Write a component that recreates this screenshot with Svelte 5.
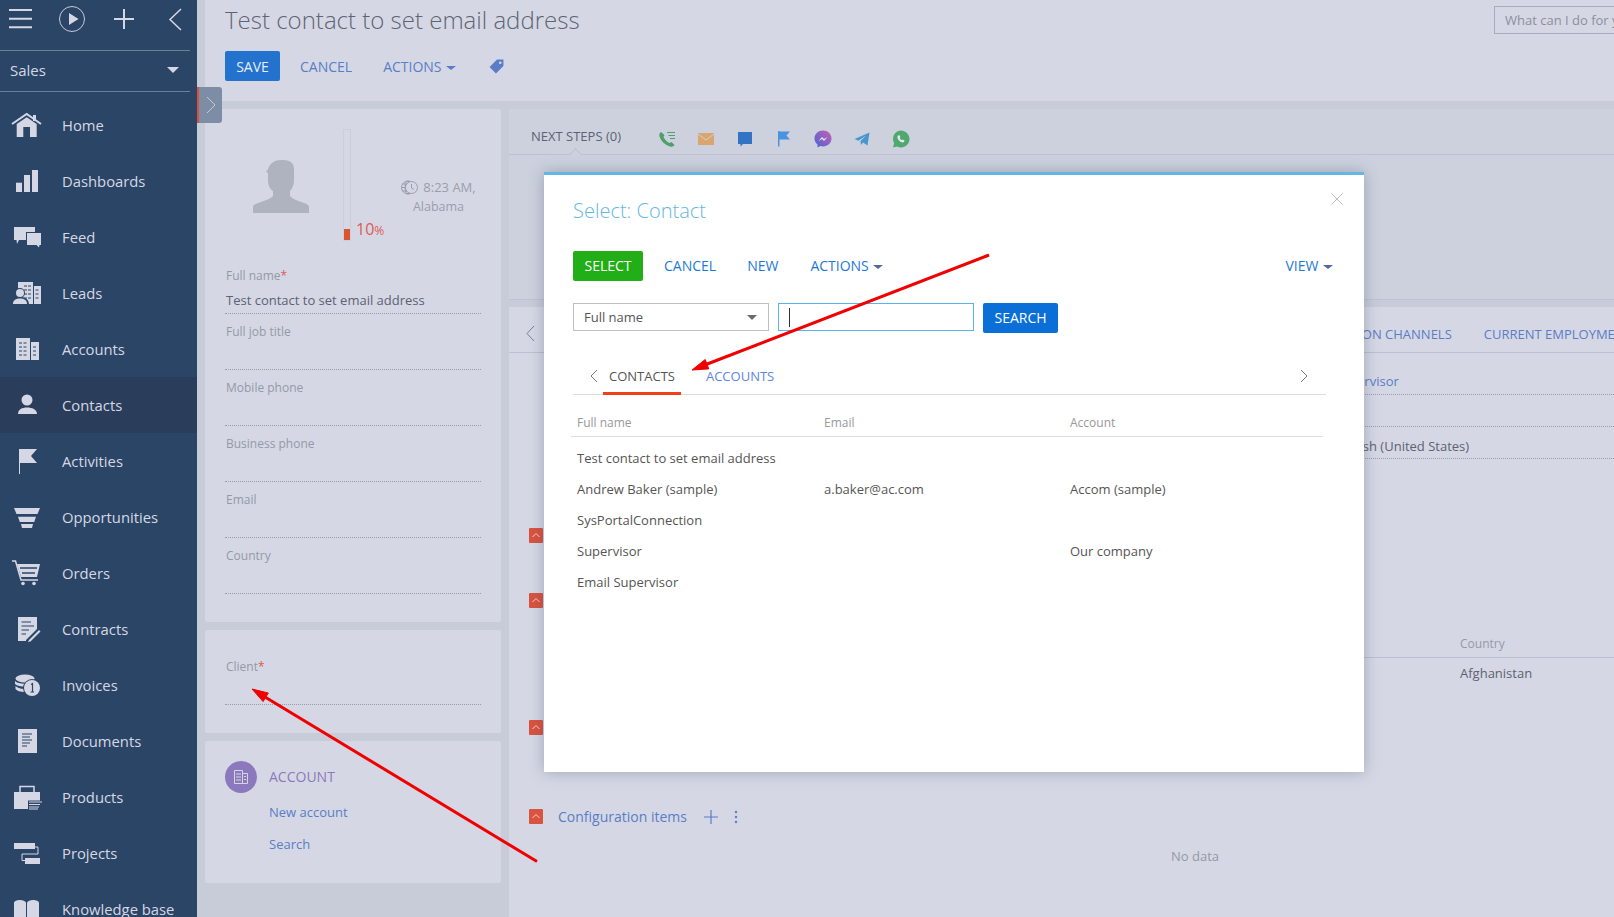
<script>
  const dark = '#2b4566';
  const nav = [
    { name: 'Home', icon: `<path d="M1 15 15.7 5 30 15" fill="none" stroke="#d5d8e4" stroke-width="2"/><rect x="22" y="6" width="3" height="6"/><path d="M5.700 15 15.700 8.200 25.700 15V28H19V18H12.300V28H5.700z"/>` },
    { name: 'Dashboards', icon: `<rect x="5" y="17.700" width="6" height="9.300"/><rect x="13" y="10" width="6" height="17"/><rect x="21" y="5" width="6" height="22"/>` },
    { name: 'Feed', icon: `<path d="M3 6H24V19H8L6 23 5.500 19H3z"/><path d="M15 11H31V25H29.500L28.500 28 25 25H15z" fill="${dark}"/><path d="M16 12H30V24H28.500L28 26.500 25.500 24H16z"/>` },
    { name: 'Leads', icon: `<path d="M7 5H22V27H7z"/><path d="M23 9H30V27H23z"/><path d="M13 9H20M13 13H20M13 17H20M13 21H20M24.500 13H28.500M24.500 17H28.500M24.500 21H28.500" stroke="${dark}" stroke-dasharray="3 1"/><circle cx="9" cy="16" r="5" fill="${dark}"/><path d="M0 28C0 21 5 20 9 20S18 21 18 28z" fill="${dark}"/><circle cx="9" cy="16" r="4"/><path d="M2 27C2 23 5 21.500 9 21.500S16 23 16 27z"/>` },
    { name: 'Accounts', icon: `<path d="M5 5H19V27H5z"/><path d="M20 9H28V27H20z"/><path d="M8 10H17M8 14H17M8 18H17M8 22H17M22 14H26M22 18H26M22 22H26" stroke="${dark}" stroke-dasharray="3 1.500"/>` },
    { name: 'Contacts', icon: `<circle cx="16" cy="11" r="5.500"/><path d="M7 25C7 20.500 11 18.500 16 18.500S26 20.500 26 25z"/>` },
    { name: 'Activities', icon: `<rect x="8" y="4" width="1" height="25"/><path d="M9 4H26L20 11 26 18H9z"/>` },
    { name: 'Opportunities', icon: `<path d="M3 7H29L26.500 13H5.500z"/><path d="M7 15.700H25L23.200 21H8.800z"/><path d="M10 23H22L21 27H11z"/>` },
    { name: 'Orders', icon: `<path d="M1 4H4.500L10 23H27" fill="none" stroke="#d5d8e4" stroke-width="1.500"/><path d="M6 7H29L26 20H10z"/><path d="M9 11H26M11 16H24" stroke="${dark}" stroke-width="1.500"/><circle cx="12" cy="26.500" r="1.800"/><circle cx="23" cy="26.500" r="1.800"/>` },
    { name: 'Contracts', icon: `<path d="M7 4H26V16L15 27V28H7z"/><path d="M10.500 9H20M10.500 13H23M10.500 17H18M10.500 21H15" stroke="${dark}" stroke-width="1.200"/><path d="M17 27 28 15.500 31 18 20 29 16 30z" fill="${dark}"/><path d="M18 27 28 17 29.500 18.500 19.500 28.500 17 29z"/>` },
    { name: 'Invoices', icon: `<ellipse cx="14" cy="9.500" rx="9.500" ry="4"/><path d="M4 12C7 15.500 20 15.500 24 12V15C20 18.500 8 18.500 4 15z"/><path d="M4.500 17C8 20 13 20 14 20V23C9 23 6 22 4.500 20z"/><circle cx="21" cy="19" r="9" fill="${dark}"/><circle cx="21" cy="19" r="8"/><path d="M20 15.500 21.500 14.500V23M19.500 23H23" fill="none" stroke="${dark}" stroke-width="1.200"/>` },
    { name: 'Documents', icon: `<path d="M7 4H26V28H7z"/><path d="M11 9H21M11 12H19M11 15H21M11 18H19M11 21H16" stroke="${dark}" stroke-width="1"/>` },
    { name: 'Products', icon: `<path d="M9 11V5.500H23V11" fill="none" stroke="#d5d8e4" stroke-width="1.500"/><path d="M3 11H29V28H3z"/><path d="M17 19.500H32V29H17z" fill="${dark}"/><path d="M18 21H31M18 23.500H29M18 26H28M18 28H27" stroke="#d5d8e4" stroke-width="1"/>` },
    { name: 'Projects', icon: `<rect x="3" y="6" width="21" height="6"/><rect x="14" y="21" width="15" height="6"/><path d="M24 10H27V17H11V23.500H14" fill="none" stroke="#d5d8e4" stroke-width="1"/>` },
    { name: 'Knowledge base', icon: `<path d="M3 10C3 8 6 7 9 7S14 8 15 9.500V32H3z"/><path d="M16 9.500C17 8 19 7 22 7S28 8 28 10V32H16z"/>` }
  ];
  const fields = ['Full job title', 'Mobile phone', 'Business phone', 'Email', 'Country'];
  const columns = ['Full name', 'Email', 'Account'];
  const rows = [
    ['Test contact to set email address', '', ''],
    ['Andrew Baker (sample)', 'a.baker@ac.com', 'Accom (sample)'],
    ['SysPortalConnection', '', ''],
    ['Supervisor', '', 'Our company'],
    ['Email Supervisor', '', '']
  ];
</script>

{#snippet chevronToggle()}
  <svg width="14" height="15" viewBox="0 0 14 15"><path d="M3.500 9 7 5.500 10.500 9" fill="none" stroke="#f3d5cc" stroke-width="1"/></svg>
{/snippet}

<div class="page">
  <aside class="sidebar">
    <div class="side-tools">
      <svg width="197" height="38" viewBox="0 0 197 38">
        <path d="M9 10H32M9 18.700H32M9 27.300H32" stroke="#d5d8e4" stroke-width="2"/>
        <circle cx="72" cy="19" r="12.500" fill="none" stroke="#c6cbd8" stroke-width="1"/>
        <path d="M69 13 78.500 19 69 25z" fill="#d5d8e4"/>
        <path d="M114 19H134M124 9V29" stroke="#d5d8e4" stroke-width="2"/>
        <path d="M181 9 170 19.500 181 30" fill="none" stroke="#d5d8e4" stroke-width="1.500"/>
      </svg>
    </div>
    <div class="side-select">
      <span>Sales</span>
      <i class="caret"></i>
    </div>
    <nav>
      {#each nav as item}
        <div class="nav-item" class:active={item.name === 'Contacts'}>
          <svg width="32" height="32" viewBox="0 0 32 32" fill="#d5d8e4">{@html item.icon}</svg>
          <span>{item.name}</span>
        </div>
      {/each}
    </nav>
  </aside>

  <main class="main">
    <header class="header">
      <div class="title-row">
        <h1>Test contact to set email address</h1>
        <div class="ask">What can I do for you?</div>
      </div>
      <div class="toolbar">
        <button class="btn save">SAVE</button>
        <span class="link cancel">CANCEL</span>
        <span class="link actions">ACTIONS <i class="caret small"></i></span>
        <svg class="tag" width="15" height="15" viewBox="0 0 14 14"><path d="M7.500 .5H13.500V6.500L6.500 13.500 .5 7.500z" fill="#5a7dc6" /><circle cx="10.500" cy="3.500" r="1.200" fill="#d5d8e4"/></svg>
      </div>
    </header>

    <div class="body">
      <div class="left">
        <section class="card profile">
          <div class="hero">
            <svg class="avatar" width="56" height="53" viewBox="0 0 56 53"><path d="M15 9C17 3 22 0 28 0 35 0 41 1 41 9V20C41 25 39 29 37 31V36C39 39 46 41 51 43 54 44 56 45 56 47V53H0V47C0 45 2 44 5 43 10 41 18 39 20 36V31C17 29 15 25 15 20V13L13 12z" fill="#afb3c0"/></svg>
            <div class="meter"><div class="meter-fill"></div></div>
            <div class="pct">10<small>%</small></div>
            <div class="time">
              <div class="clock-line">
                <svg width="17" height="17" viewBox="0 0 17 17" fill="none" stroke="#9a9eac" stroke-width="1"><circle cx="7" cy="8.500" r="6.500"/><ellipse cx="7" cy="8.500" rx="3" ry="6.500"/><path d="M.5 8.500H8M1.500 5H8M1.500 12H8"/><circle cx="10.500" cy="8.500" r="6" fill="#d5d8e4"/><path d="M10.500 5V9L13 10.500"/></svg>
                <span>8:23 AM,</span>
              </div>
              <div>Alabama</div>
            </div>
          </div>
          <div class="field">
            <div class="label">Full name<em>*</em></div>
            <div class="value">Test contact to set email address</div>
          </div>
          {#each fields as f}
            <div class="field"><div class="label">{f}</div></div>
          {/each}
        </section>

        <section class="card client">
          <div class="field"><div class="label">Client<em>*</em></div></div>
        </section>

        <section class="card account">
          <div class="account-head">
            <span class="circle">
              <svg width="16" height="14" viewBox="0 0 16 14" fill="none" stroke="#d5d8e4" stroke-width="1"><path d="M1.500 .5H9.500V13.500H1.500zM9.500 3.500H14.500V13.500H9.500zM3 4H8M3 7H8M3 10H8M11 6.500H13M11 9.500H13"/></svg>
            </span>
            <span class="account-title">ACCOUNT</span>
          </div>
          <div class="account-link first">New account</div>
          <div class="account-link">Search</div>
        </section>
      </div>

      <div class="right">
        <div class="steps">
          <div class="steps-bar">
            <span class="steps-title">NEXT STEPS (0)</span>
            <div class="step-icons">
              <svg width="24" height="24" viewBox="0 0 24 24"><path d="M6 5C4.500 6 4 7.500 4.500 9.500 6 14 10 18 15 19.500 17 20 18.500 19.500 19.500 18L16.500 15 14.500 16C12 15 9.500 12.500 8.500 10L9.500 8z" fill="#4f9f6b"/><path d="M12 5.500H20M13.500 8.500H20M15 11.500H20" stroke="#4f9f6b" stroke-width="1"/></svg>
              <svg width="24" height="24" viewBox="0 0 24 24"><rect x="4" y="6" width="16" height="12" fill="#dba56e"/><path d="M4 7 12 13 20 7" fill="none" stroke="#cdd1de" stroke-width="1"/></svg>
              <svg width="24" height="24" viewBox="0 0 24 24"><path d="M5 5H19V17H10L7.500 19.500V17H5z" fill="#3373c4"/></svg>
              <svg width="24" height="24" viewBox="0 0 24 24"><rect x="6" y="4" width="1.500" height="15.500" fill="#4a93e0"/><path d="M7 4.500H18L14.500 8.500 18 12.500H7z" fill="#4a93e0"/></svg>
              <svg width="24" height="24" viewBox="0 0 24 24"><defs><linearGradient id="ms" x1="0" y1="1" x2="1" y2="0"><stop offset="0" stop-color="#4a63d8"/><stop offset="1" stop-color="#c85fb0"/></linearGradient></defs><path d="M12 3.500C7.300 3.500 3.500 7 3.500 11.500 3.500 14 4.600 16 6.500 17.400V20.500L9.400 19C10.200 19.300 11.100 19.400 12 19.400 16.700 19.400 20.500 16 20.500 11.500S16.700 3.500 12 3.500z" fill="url(#ms)"/><path d="M7.500 14 11 10 13 12 16.500 10 13 14 11 12z" fill="#e6e8f0"/></svg>
              <svg width="24" height="24" viewBox="0 0 24 24"><path d="M4.500 12 19.500 5.500 17.500 18.500 13 15.500 11 18 10.500 14 16 8.500 8.500 13.700z" fill="#4a96cc"/></svg>
              <svg width="24" height="24" viewBox="0 0 24 24"><path d="M4 20.500 5.200 16.200C4.400 14.900 4 13.500 4 12 4 7.300 7.600 3.500 12 3.500S20.500 7.300 20.500 12 16.700 20.500 12 20.500C10.600 20.500 9.200 20.100 8 19.400z" fill="#4fa96e"/><path d="M9 8.500C8 9.500 8.300 11.500 10 13.500S13.800 16 15 15L15.500 13.500 13.700 12.500 12.800 13.300C11.800 12.800 11 12 10.600 11L11.400 10 10.500 8.300z" fill="#e6e8f0"/></svg>
            </div>
            <i class="notch"></i>
          </div>
        </div>

        <div class="detail">
          <div class="tabs">
            <svg class="tabs-back" width="11" height="17" viewBox="0 0 11 17"><path d="M9 1 2 8.500 9 16" fill="none" stroke="#7b8090" stroke-width="1"/></svg>
            <span class="tab-a">COMMUNICATION CHANNELS</span>
            <span class="tab-b">CURRENT EMPLOYMENT</span>
          </div>

          <div class="sec sec-fields">
            <div class="info">
              <div class="info-row link-text">Supervisor</div>
              <div class="info-row"></div>
              <div class="info-row">English (United States)</div>
            </div>
          </div>

          <div class="sec sec1"><span class="red">{@render chevronToggle()}</span></div>

          <div class="sec sec2">
            <span class="red">{@render chevronToggle()}</span>
            <div class="mini-table">
              <div class="mini-head">Country</div>
              <div class="mini-cell">Afghanistan</div>
            </div>
          </div>

          <div class="sec sec3"><span class="red">{@render chevronToggle()}</span></div>

          <div class="sec sec4">
            <div class="sec-head">
              <span class="red">{@render chevronToggle()}</span>
              <span class="sec-title">Configuration items</span>
              <svg width="14" height="14" viewBox="0 0 14 14"><path d="M0 7H14M7 0V14" stroke="#5a7dc6" stroke-width="1.200"/></svg>
              <svg class="dots" width="4" height="14" viewBox="0 0 4 14" fill="#5a7dc6"><circle cx="2" cy="2" r="1.200"/><circle cx="2" cy="7" r="1.200"/><circle cx="2" cy="12" r="1.200"/></svg>
            </div>
            <div class="no-data">No data</div>
          </div>
        </div>
      </div>
    </div>
  </main>

  <button class="panel-toggle" aria-label="Expand">
    <svg width="10" height="18" viewBox="0 0 10 18"><path d="M1 1 9 9 1 17" fill="none" stroke="#c3c9d6" stroke-width="1"/></svg>
  </button>

  <div class="modal">
    <svg class="close" width="12" height="12" viewBox="0 0 12 12"><path d="M.5 .5 11.500 11.500M11.500 .5 .5 11.500" stroke="#bdbdbd" stroke-width="1"/></svg>
    <h2>Select: Contact</h2>
    <div class="m-toolbar">
      <button class="btn select">SELECT</button>
      <span class="m-link m-cancel">CANCEL</span>
      <span class="m-link m-new">NEW</span>
      <span class="m-link m-actions">ACTIONS <i class="caret small slate"></i></span>
      <span class="m-link m-view">VIEW <i class="caret small slate"></i></span>
    </div>
    <div class="m-filter">
      <div class="dropdown"><span>Full name</span><i class="caret small grey"></i></div>
      <div class="search-input"><i class="cursor"></i></div>
      <button class="btn search">SEARCH</button>
    </div>
    <div class="m-tabs">
      <svg class="m-back" width="10" height="14" viewBox="0 0 10 14"><path d="M8 1 2 7 8 13" fill="none" stroke="#777" stroke-width="1"/></svg>
      <span class="m-tab on">CONTACTS</span>
      <span class="m-tab">ACCOUNTS</span>
      <svg class="m-next" width="10" height="14" viewBox="0 0 10 14"><path d="M2 1 8 7 2 13" fill="none" stroke="#777" stroke-width="1"/></svg>
    </div>
    <div class="grid-head">
      {#each columns as c}<span>{c}</span>{/each}
    </div>
    <div class="grid-body">
      {#each rows as r}
        <div class="grid-row">
          {#each r as cell}<span>{cell}</span>{/each}
        </div>
      {/each}
    </div>
  </div>

  <svg class="arrows" width="1614" height="917" viewBox="0 0 1614 917">
    <path d="M989 255 706 364.500" stroke="#f00000" stroke-width="3" />
    <path d="M692 370 708.800 368.900 705.200 359.500z" fill="#f00000" stroke="#f00000" />
    <path d="M537 861.500 265 697" stroke="#f00000" stroke-width="3" />
    <path d="M252 689 268.300 693 263.100 701.600z" fill="#f00000" stroke="#f00000" />
  </svg>
</div>

<style>
  :global(body) {
    margin: 0;
    font-family: "Open Sans", sans-serif;
  }

  .page {
    position: relative;
    display: flex;
    width: 1614px;
    height: 917px;
    overflow: hidden;
    background: #c8ccd9;
    font-size: 13px;
    color: #5c6273;
  }

  button {
    font-family: inherit;
    border: none;
    cursor: pointer;
  }

  .caret {
    display: inline-block;
    width: 0;
    height: 0;
    border-left: 6px solid transparent;
    border-right: 6px solid transparent;
    border-top: 6px solid #d5d8e4;
  }

  .caret.small {
    border-left-width: 5px;
    border-right-width: 5px;
    border-top-width: 4px;
    border-top-color: #5a7dc6;
    vertical-align: 2px;
    margin-left: 1px;
  }

  .caret.slate { border-top-color: #52689e; }
  .caret.grey { border-top-color: #6b6b6b; border-top-width: 5px; }

  /* sidebar */
  .sidebar {
    width: 197px;
    flex-shrink: 0;
    background: #2b4566;
    color: #d5d8e4;
  }

  .side-tools {
    height: 50px;
    width: 190px;
    border-bottom: 1px solid #6d7f97;
  }

  .side-tools svg { display: block; }

  .side-select {
    display: flex;
    align-items: center;
    justify-content: space-between;
    width: 190px;
    height: 41px;
    box-sizing: border-box;
    padding: 0 11px 2px 10px;
    font-size: 15px;
    border-bottom: 1px solid #6d7f97;
  }

  nav { margin-top: 5px; }

  .nav-item {
    display: flex;
    align-items: center;
    height: 56px;
    padding-left: 11px;
    font-size: 14.800px;
  }

  .nav-item svg { margin-right: 19px; flex-shrink: 0; }
  .nav-item.active { background: #2a3d5b; }

  /* main */
  .main {
    flex: 1;
    min-width: 0;
    padding-left: 8px;
  }

  .header {
    height: 101px;
    box-sizing: border-box;
    padding: 0 0 0 20px;
    background: #d5d8e4;
  }

  .title-row {
    display: flex;
    justify-content: space-between;
    align-items: flex-start;
  }

  h1 {
    margin: 3px 0 0;
    font-size: 24px;
    line-height: 33px;
    font-weight: 300;
    color: #5f6475;
  }

  .ask {
    width: 120px;
    height: 28px;
    margin-top: 6px;
    box-sizing: border-box;
    padding-left: 10px;
    border: 1px solid #a8abb9;
    border-right: none;
    line-height: 26px;
    color: #8b8f9e;
    white-space: nowrap;
    overflow: hidden;
  }

  .toolbar {
    display: flex;
    align-items: center;
    height: 30px;
    margin-top: 15px;
  }

  .btn {
    height: 30px;
    padding: 0;
    border-radius: 2px;
    color: #fff;
    font-size: 14px;
  }

  .save {
    width: 55px;
    background: #2272ce;
    color: #e8ecf4;
  }

  .link {
    color: #5a7dc6;
    font-size: 14px;
    padding-top: 1px;
  }

  .cancel { margin-left: 20px; }
  .actions { margin-left: 31px; }
  .tag { margin-left: 33px; margin-top: 1px; }

  .body {
    display: flex;
    margin-top: 8px;
  }

  .left {
    width: 296px;
    flex-shrink: 0;
    display: flex;
    flex-direction: column;
    gap: 8px;
  }

  .card {
    background: #d5d8e4;
    border-radius: 2px;
    box-sizing: border-box;
    padding: 0 20px;
  }

  .profile { height: 513px; }
  .client { height: 103px; padding-top: 19px; }
  .account { height: 142px; padding-top: 20px; }

  .hero {
    display: flex;
    height: 149px;
    box-sizing: border-box;
    padding: 20px 0 0 28px;
  }

  .avatar {
    margin-top: 31px;
    flex-shrink: 0;
  }

  .meter {
    position: relative;
    width: 6px;
    height: 110px;
    margin-left: 34px;
    border: 1px solid #cbcedb;
  }

  .meter-fill {
    position: absolute;
    left: 0;
    right: 0;
    bottom: 0;
    height: 11px;
    background: #d9552f;
  }

  .pct {
    margin: 88px 0 0 5px;
    line-height: 24px;
    font-size: 16px;
    color: #df5b55;
  }

  .pct small { font-size: 12px; }

  .time {
    margin: 49px 0 0 auto;
    width: 85px;
    text-align: center;
    line-height: 19px;
    font-size: 12.500px;
    color: #9a9eac;
  }

  .clock-line {
    display: flex;
    align-items: center;
    justify-content: center;
    gap: 5px;
    white-space: nowrap;
    font-size: 13px;
  }

  .field {
    height: 56px;
    box-sizing: border-box;
    padding-top: 8px;
    border-bottom: 1px dotted #9a9dab;
  }

  .label {
    padding-left: 1px;
    line-height: 20px;
    font-size: 12px;
    color: #9498a7;
  }

  .label em {
    font-style: normal;
    color: #df5b55;
  }

  .value {
    margin-top: 4px;
    padding-left: 1px;
    line-height: 20px;
    color: #5c6273;
  }

  .client .field { height: 56px; padding-top: 0; margin-top: 0; }
  .client .label { padding-top: 8px; }

  .account-head {
    display: flex;
    align-items: center;
    gap: 12px;
  }

  .circle {
    display: flex;
    align-items: center;
    justify-content: center;
    width: 32px;
    height: 32px;
    border-radius: 50%;
    background: #8c78bd;
  }

  .account-title {
    padding-bottom: 2px;
    font-size: 14px;
    color: #8c78bd;
  }

  .account-link {
    margin: 12px 0 0 44px;
    line-height: 20px;
    color: #5a7dc6;
  }

  .account-link.first { margin-top: 9px; }

  .right {
    flex: 1;
    min-width: 0;
    margin-left: 8px;
  }

  .steps {
    height: 190px;
    background: #cdd1de;
    border-bottom: 1px solid #bfc3d1;
  }

  .steps-bar {
    position: relative;
    display: flex;
    align-items: center;
    height: 46px;
    padding-left: 22px;
    padding-top: 12px;
    box-sizing: border-box;
    border-bottom: 1px solid #bcc0cf;
  }

  .steps-title {
    width: 124px;
    margin-top: -4px;
    font-size: 13px;
    color: #5c6273;
    white-space: nowrap;
  }

  .step-icons {
    display: flex;
    gap: 15px;
    margin-top: 2px;
  }

  .step-icons svg { display: block; }

  .notch {
    position: absolute;
    left: 62px;
    bottom: -5px;
    width: 8px;
    height: 8px;
    background: #cdd1de;
    border-left: 1px solid #bcc0cf;
    border-top: 1px solid #bcc0cf;
    transform: rotate(45deg);
  }

  .detail {
    height: 610px;
    margin-top: 7px;
    background: #d5d8e4;
    padding-left: 20px;
  }

  .tabs {
    display: flex;
    align-items: center;
    height: 37px;
    padding-top: 8px;
    margin-left: -20px;
    border-bottom: 1px solid #bcc0cf;
    white-space: nowrap;
    overflow: hidden;
  }

  .tabs > * { flex-shrink: 0; }
  .tabs-back { margin-left: 16px; }
  .tab-a { margin-left: 734px; color: #5a7dc6; }
  .tab-b { margin-left: 32px; color: #5a7dc6; }

  .sec { position: relative; }
  .sec-fields { height: 175px; }

  .info {
    margin-left: 805px;
  }

  .info-row {
    height: 32px;
    box-sizing: border-box;
    line-height: 20px;
    padding-top: 9px;
    border-bottom: 1px dotted #9a9dab;
    color: #5c6273;
  }

  .info-row:first-child {
    height: 42px;
    padding-top: 18px;
  }

  .link-text { color: #5a7dc6; }

  .sec1 { height: 65px; }
  .sec2 { height: 127px; }
  .sec3 { height: 89px; }

  .red {
    display: block;
    width: 14px;
    height: 15px;
    border-radius: 1px;
    background: #d9533f;
    flex-shrink: 0;
  }

  .red svg { display: block; }

  .mini-table { margin-top: 25px; }

  .mini-head {
    height: 25px;
    box-sizing: border-box;
    padding: 1px 0 0 116px;
    margin-left: 815px;
    line-height: 20px;
    font-size: 12px;
    color: #9498a7;
    border-bottom: 1px solid #bcc0cf;
  }

  .mini-cell {
    padding: 5px 0 0 931px;
    line-height: 20px;
    color: #5c6273;
  }

  .sec-head {
    display: flex;
    align-items: center;
    height: 15px;
  }

  .sec-title {
    margin: 0 17px 0 15px;
    font-size: 14px;
    color: #5a7dc6;
  }

  .dots { margin-left: 16px; }

  .no-data {
    margin: 22px 0 0 642px;
    line-height: 20px;
    color: #9498a7;
  }

  .panel-toggle {
    position: absolute;
    left: 197px;
    top: 87px;
    display: flex;
    align-items: center;
    justify-content: center;
    width: 25px;
    height: 36px;
    padding: 0;
    background: #7e8da6;
    border-left: 2px solid #d9503c;
    border-radius: 0 3px 3px 0;
  }

  /* modal */
  .modal {
    position: absolute;
    left: 544px;
    top: 172px;
    width: 820px;
    height: 600px;
    box-sizing: border-box;
    padding: 0 0 0 29px;
    background: #fff;
    border-top: 3px solid #64b7e3;
    box-shadow: 0 0 14px rgba(60, 70, 100, 0.35);
    color: #555;
  }

  .close {
    position: absolute;
    top: 18px;
    right: 21px;
  }

  h2 {
    margin: 21px 0 0;
    font-size: 20px;
    line-height: 30px;
    font-weight: 300;
    color: #64b7e3;
  }

  .m-toolbar {
    display: flex;
    align-items: center;
    height: 30px;
    margin-top: 25px;
  }

  .select {
    width: 70px;
    padding-bottom: 2px;
    background: #22ae16;
  }

  .m-link {
    padding-bottom: 2px;
    font-size: 14px;
    color: #1e7ad6;
  }

  .m-cancel { margin-left: 21px; }
  .m-new { margin-left: 31px; }
  .m-actions { margin-left: 32px; }
  .m-view { margin-left: auto; margin-right: 31px; }

  .m-filter {
    display: flex;
    align-items: flex-start;
    margin-top: 22px;
  }

  .dropdown {
    display: flex;
    align-items: center;
    justify-content: space-between;
    width: 196px;
    height: 28px;
    box-sizing: border-box;
    padding: 0 11px 0 10px;
    border: 1px solid #c0c0c0;
    color: #555;
  }

  .search-input {
    display: flex;
    align-items: center;
    width: 196px;
    height: 28px;
    box-sizing: border-box;
    margin-left: 9px;
    padding-left: 10px;
    border: 1px solid #5ab4ec;
  }

  .cursor {
    width: 1px;
    height: 19px;
    background: #333;
  }

  .search {
    width: 75px;
    margin-left: 9px;
    padding-bottom: 2px;
    background: #0a6fd6;
  }

  .m-tabs {
    position: relative;
    display: flex;
    align-items: center;
    width: 753px;
    height: 43px;
    margin-top: 19px;
    padding-top: 6px;
    box-sizing: border-box;
    border-bottom: 1px solid #ddd;
  }

  .m-back { margin-left: 16px; }

  .m-tab {
    position: relative;
    margin-left: 10px;
    font-size: 13px;
    color: #5a86e0;
  }

  .m-tab.on {
    color: #555;
    margin-left: 10px;
  }

  .m-tab.on::after {
    content: '';
    position: absolute;
    left: -6px;
    right: -6px;
    bottom: -10px;
    height: 3px;
    background: #f0401a;
  }

  .m-tab:not(.on) { margin-left: 31px; }
  .m-next { margin-left: auto; margin-right: 17px; }

  .grid-head, .grid-row {
    display: grid;
    grid-template-columns: 247px 246px 1fr;
    padding-left: 6px;
  }

  .grid-head {
    width: 752px;
    margin: 19px 0 0 -2px;
    box-sizing: border-box;
    padding: 0 0 4px 6px;
    line-height: 18px;
    font-size: 12px;
    color: #999;
    border-bottom: 1px solid #ddd;
  }

  .grid-body {
    width: 750px;
    margin-top: 6px;
    margin-left: -2px;
  }

  .grid-row {
    height: 31px;
    line-height: 31px;
    color: #555;
  }

  .arrows {
    position: absolute;
    left: 0;
    top: 0;
    pointer-events: none;
  }
</style>
